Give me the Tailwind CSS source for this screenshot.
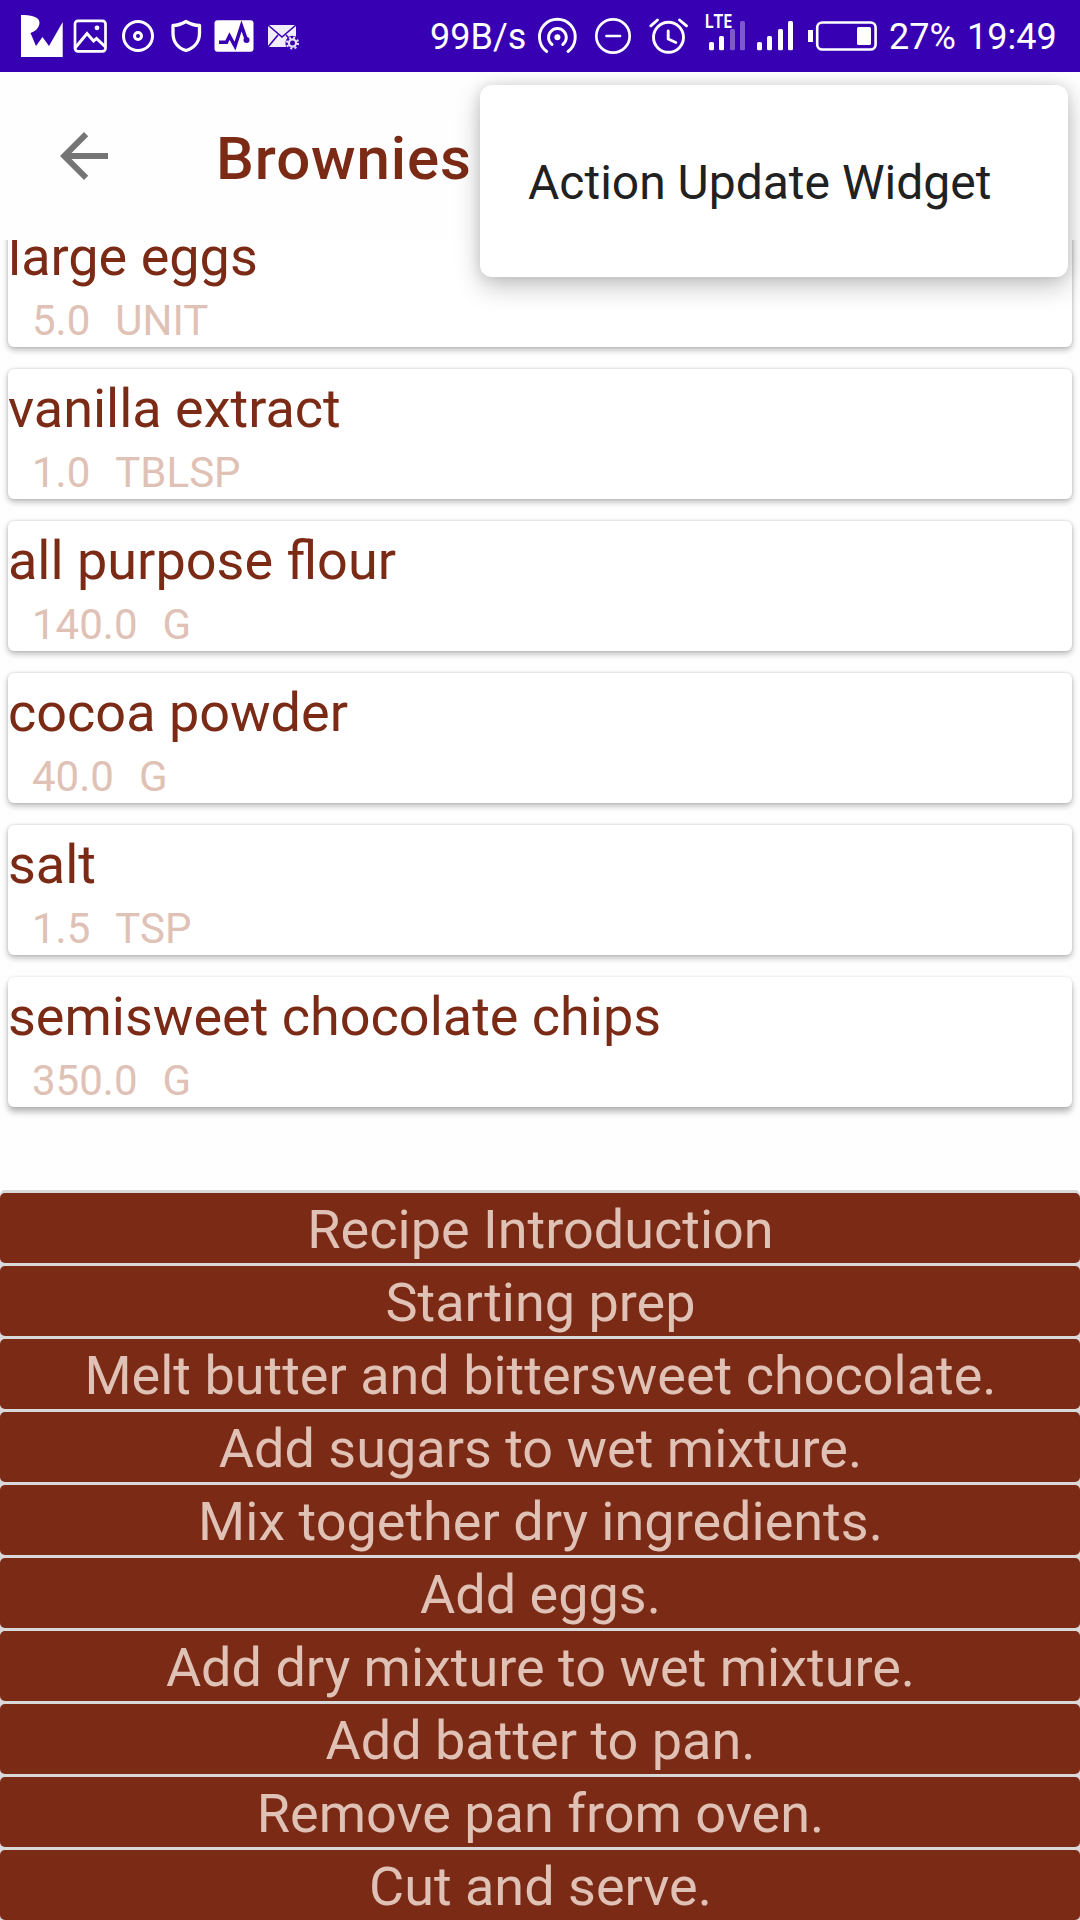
<!DOCTYPE html>
<html lang="en">
<head>
<meta charset="utf-8">
<title>Brownies</title>
<script src="https://cdn.jsdelivr.net/npm/@tailwindcss/browser@4"></script>
</head>
<body class="relative w-[1080px] h-[1920px] overflow-hidden flex flex-col bg-[#fefefe] font-['Roboto',sans-serif]">

<!-- Status bar -->
<header class="h-[72px] shrink-0 flex bg-[#3700b3] text-white text-4xl leading-[75px] whitespace-nowrap">
  <svg class="w-[70px] h-[72px] shrink-0" viewBox="0 0 70 72" fill="#fff"><path d="M21 15C30 15 39.500 16.500 39.500 22.500C39.500 28 35 31.500 30.500 33L36 46L42.500 37L49 46L62.700 22V57H21Z"/></svg>
  <svg class="w-[45px] h-[72px] shrink-0" viewBox="70 0 45 72" fill="none" stroke="#fff" stroke-width="2.700"><rect x="75" y="20.800" width="30.500" height="30.500" rx="3"/><path d="M75 48L87 33.500L93.500 41L96.500 38.500L105.500 47" stroke-width="3"/><circle cx="97" cy="27.800" r="2.400" fill="#fff" stroke="none"/></svg>
  <svg class="w-[47px] h-[72px] shrink-0" viewBox="115 0 47 72" fill="none" stroke="#fff" stroke-width="3"><circle cx="138" cy="36" r="14.500"/><circle cx="138" cy="36" r="3.500"/></svg>
  <svg class="w-[46px] h-[72px] shrink-0" viewBox="162 0 46 72" fill="none" stroke="#fff" stroke-width="3.300" stroke-linejoin="round"><path d="M186 21.500Q179 25.500 173 25.500V33C173 43 179 48.500 186 50.500C193 48.500 199.500 43 199.500 33V25.500Q193 25.500 186 21.500Z"/></svg>
  <svg class="w-[52px] h-[72px] shrink-0" viewBox="208 0 52 72"><rect x="214.500" y="20.200" width="39" height="31.500" rx="3" fill="#fff"/><path d="M219 42.300H226.500L229.500 36L235 46L241.500 26L246.500 40" fill="none" stroke="#3700b3" stroke-width="3.500"/><circle cx="246.500" cy="40" r="3" fill="#3700b3"/></svg>
  <svg class="w-[170px] h-[72px] shrink-0" viewBox="260 0 170 72"><rect x="268" y="25" width="28" height="22" fill="#fff" fill-opacity=".93"/><path d="M268 25L282 37L296 25M268 47L278 35M286 35L296 46" fill="none" stroke="#3700b3" stroke-width="1.600"/><circle cx="292.500" cy="43" r="7.200" fill="#3700b3"/><circle cx="292.500" cy="43" r="3.600" fill="none" stroke="#e9e0fa" stroke-width="2.200"/><circle cx="292.500" cy="43" r="5.500" fill="none" stroke="#e9e0fa" stroke-width="2.200" stroke-dasharray="2 2.320"/></svg>
  <span class="w-[105px] shrink-0">99B/s</span>
  <svg class="w-[52px] h-[72px] shrink-0" viewBox="535 0 52 72" fill="none" stroke="#fff" stroke-width="2.900" stroke-linecap="round"><path d="M546.700 51.500A17.900 17.900 0 1 1 568 51.500M552 44.500A8.900 8.900 0 1 1 562.800 44.500"/><circle cx="557.400" cy="37.300" r="3" fill="#fff" stroke="none"/></svg>
  <svg class="w-[55px] h-[72px] shrink-0" viewBox="587 0 55 72" fill="none" stroke="#fff" stroke-width="2.700" stroke-linecap="round"><circle cx="613" cy="36" r="16.700"/><path d="M606.500 36H620"/></svg>
  <svg class="w-[58px] h-[72px] shrink-0" viewBox="642 0 58 72" fill="none" stroke="#fff" stroke-width="2.900" stroke-linecap="round" stroke-linejoin="round"><circle cx="668.500" cy="37.300" r="15"/><path d="M668.200 31V39L675.800 42.500M650.800 25.800L657.500 20M679.500 20L686.500 25.800"/></svg>
  <svg class="w-[100px] h-[72px] shrink-0" viewBox="700 0 100 72" fill="#fff"><text x="704.500" y="27.700" class="font-['Noto_Sans'] font-semibold text-[19px]" textLength="28" lengthAdjust="spacingAndGlyphs">LTE</text><g><rect x="709" y="42" width="5" height="8.300" rx="1.500"/><rect x="719" y="36" width="5" height="14.300" rx="1.500"/><rect x="730" y="29" width="5" height="21.300" rx="1.500" opacity=".35"/><rect x="740" y="21" width="5" height="29.300" rx="1.500" opacity=".35"/><rect x="757" y="42" width="5" height="8.300" rx="1.500"/><rect x="767" y="36" width="5" height="14.300" rx="1.500"/><rect x="778" y="29" width="5" height="21.300" rx="1.500"/><rect x="788" y="21" width="5" height="29.300" rx="1.500"/></g></svg>
  <svg class="w-[89px] h-[72px] shrink-0" viewBox="800 0 89 72" fill="#fff"><rect x="808" y="30" width="5" height="12"/><rect x="817.200" y="22.500" width="58.400" height="27" rx="5" fill="none" stroke="#fff" stroke-width="2.600"/><rect x="857" y="27" width="14" height="18" rx="1.500"/></svg>
  <span class="w-[78px] shrink-0">27%</span>
  <span class="shrink-0">19:49</span>
</header>

<!-- App bar -->
<div class="h-[168px] shrink-0 flex">
  <svg class="w-[72px] h-[72px] ml-12 mt-12 shrink-0" viewBox="0 0 24 24" fill="#757575"><path d="M20 11H7.830l5.590-5.590L12 4l-8 8 8 8 1.410-1.410L7.830 13H20v-2z"/></svg>
  <h1 class="ml-24 mt-[50px] text-6xl leading-[73px] font-medium tracking-[0.9px] text-[#7b2a15]">Brownies</h1>
</div>

<!-- Ingredients -->
<main class="h-[950px] shrink-0 overflow-hidden">
  <div id="ingredients" class="-mt-[23px] px-2 flex flex-col gap-[22px] whitespace-pre"></div>
</main>

<!-- Steps -->
<section id="steps" class="flex-1 flex flex-col gap-[3px] pt-[3px] bg-[#d9d9d9] rounded-t-[5px]"></section>

<!-- Overflow menu -->
<div class="absolute left-[480px] top-[85px] w-[588px] h-48 rounded-xl bg-white shadow-[0_10px_26px_rgba(0,0,0,0.22),0_0_14px_rgba(0,0,0,0.12)] px-12 flex items-center text-5xl text-[#212121] whitespace-nowrap [clip-path:inset(-13px_-12px_-60px_-60px_round_0px)]"><span class="pt-[3px]">Action Update Widget</span></div>

<script>
const ingredients = [
  ["large eggs", "5.0", "UNIT"],
  ["vanilla extract", "1.0", "TBLSP"],
  ["all purpose flour", "140.0", "G"],
  ["cocoa powder", "40.0", "G"],
  ["salt", "1.5", "TSP"],
  ["semisweet chocolate chips", "350.0", "G"]
];
document.getElementById("ingredients").innerHTML = ingredients.map(([name, qty, unit]) =>
  `<article class="h-[130px] shrink-0 rounded-md bg-white shadow-[0_3px_6px_rgba(0,0,0,0.26),0_0_3px_rgba(0,0,0,0.16)] last:shadow-[0_5px_6px_rgba(0,0,0,0.28),0_0_3px_rgba(0,0,0,0.12)]"><h2 class="h-[79px] leading-[79px] text-[54px] text-[#7b2a15]">${name}</h2><p class="flex gap-[25px] pl-6 leading-[50px] text-[42px] text-[#e0c1b5]"><span>${qty}</span><span>${unit}</span></p></article>`).join("");
const steps = ["Recipe Introduction", "Starting prep", "Melt butter and bittersweet chocolate.", "Add sugars to wet mixture.", "Mix together dry ingredients.", "Add eggs.", "Add dry mixture to wet mixture.", "Add batter to pan.", "Remove pan from oven.", "Cut and serve."];
document.getElementById("steps").innerHTML = steps.map(s =>
  `<div class="h-[70px] shrink-0 rounded-[5px] bg-[#7b2a15] text-[#e0c1b5] text-center pl-px text-[54px] leading-[73px] whitespace-nowrap">${s}</div>`).join("");
</script>
</body>
</html>
